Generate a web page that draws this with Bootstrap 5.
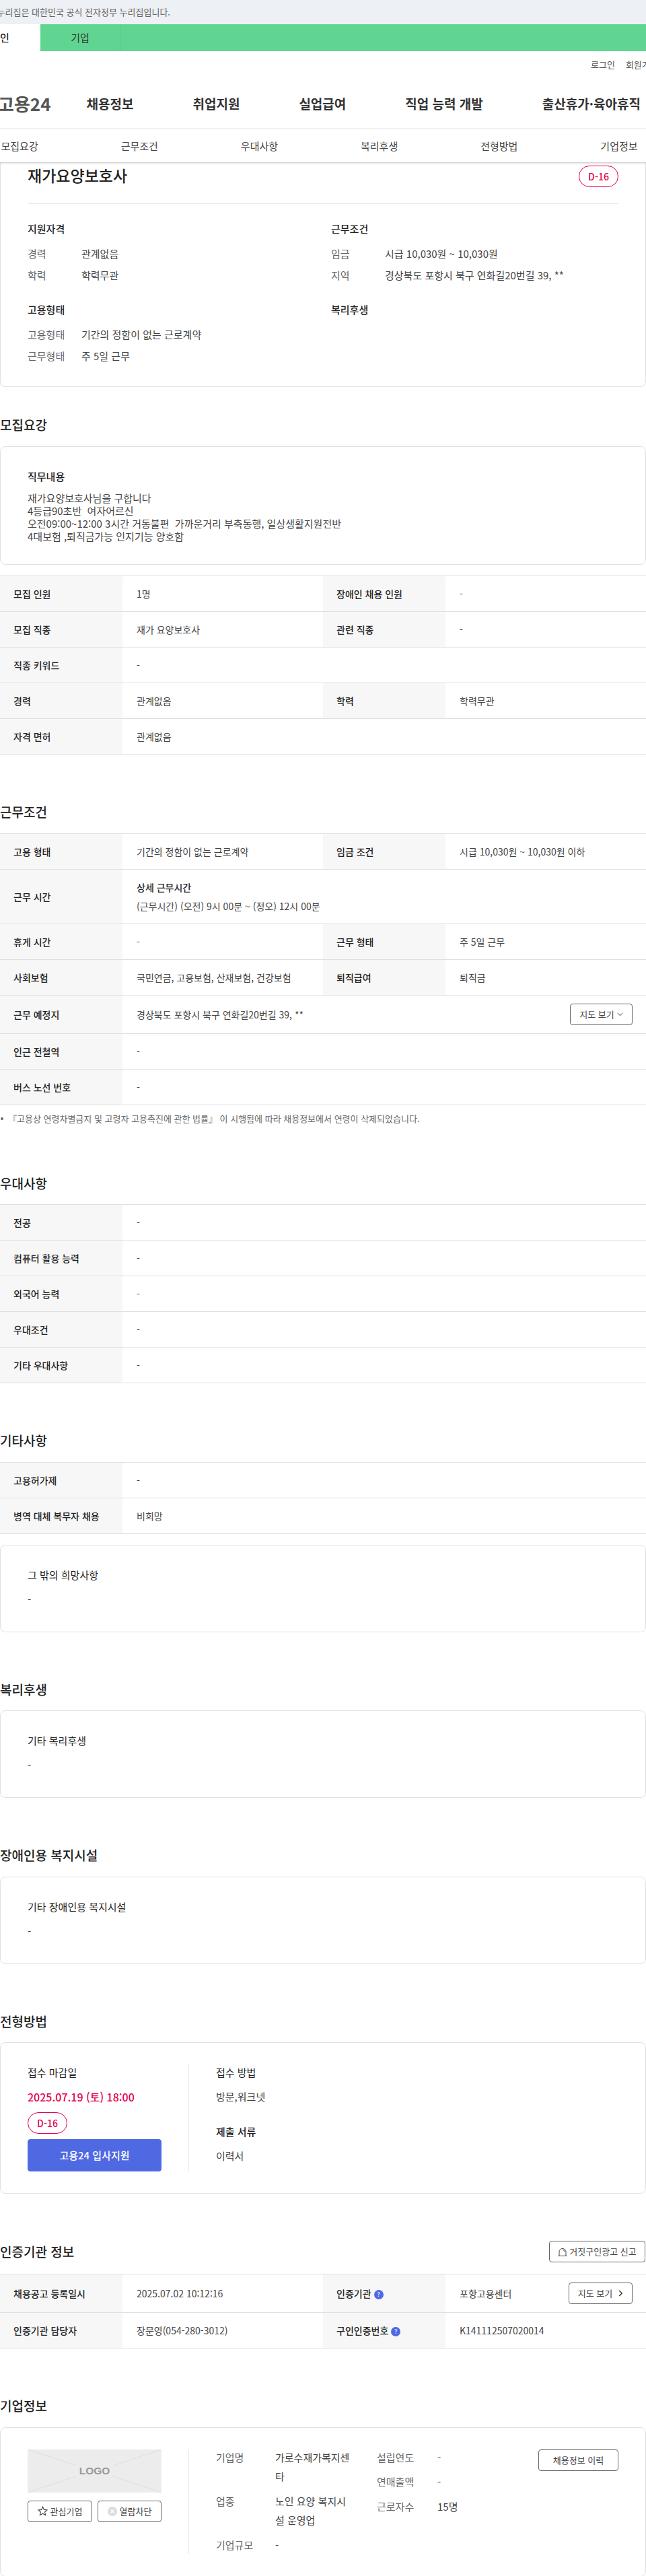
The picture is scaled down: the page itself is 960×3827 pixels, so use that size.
<!doctype html>
<html lang="ko">
<head>
<meta charset="utf-8">
<title>재가요양보호사</title>
<link href="https://cdn.jsdelivr.net/npm/bootstrap@5.3.0/dist/css/bootstrap.min.css" rel="stylesheet">
<style>
html,body{margin:0;background:#fff}
body{font-family:"Noto Sans CJK KR","Noto Sans",sans-serif;color:#333;font-size:15px;line-height:24px;overflow-x:hidden;width:960px}
.gov-strip{height:36px;background:#edf0f5;color:#666;font-size:13px;overflow:hidden;white-space:nowrap}
.gov-strip span{margin-left:-20px}
.aud-tabs{height:40px;background:#60d591;overflow:hidden}
.aud-tab{width:120px;flex:none;color:#333;font-size:15px}
.aud-tab.on{margin-left:-60px;background:#fff;color:#222;font-weight:500}
.aud-tab.off{width:119px;border-right:1px solid #56c985}
.util-row{height:40px;font-size:13px;color:#555;white-space:nowrap;overflow:hidden;padding-left:878px;gap:16px}
.main-nav{height:76px;border-bottom:1px solid #e8e8e8;overflow:hidden;white-space:nowrap;gap:88px}
.brand{font-size:26px;font-weight:700;color:#555;margin-left:-3px;margin-right:-35px}
.main-nav .nv{font-size:19px;font-weight:600;color:#333}
.sec-nav{height:49px;margin-left:-60px;width:1069px;font-size:15px;color:#444}
.sec-nav>div{flex:1 1 0;text-align:center}
.sec-wrap{overflow:hidden;box-shadow:0 1px 3px rgba(0,0,0,.25);position:relative;z-index:2;background:#fff}
.sheet{--bs-card-border-color:#e0e0e0;--bs-card-border-radius:8px;--bs-card-inner-border-radius:7px;--bs-card-color:#333}
.sheet .card-body{padding:32px 40px}
.summary{border-top:0;border-top-left-radius:0;border-top-right-radius:0;height:334px}
.summary .card-body{padding:5px 40px 0}
.job-title{font-size:23px;font-weight:500;line-height:28px;color:#222;margin:0}
.dday{display:inline-flex;align-items:center;justify-content:center;width:59px;height:32px;border:1px solid #e6004d;border-radius:16px;color:#e6004d;font-size:14px;font-weight:500}
.sum-line{margin:24px 0 25px;border:0;border-top:1px solid #e8e8e8;opacity:1}
.sum-grid{display:grid;grid-template-columns:451px 1fr}
.sub-h{font-size:15px;font-weight:500;color:#222;line-height:24px;margin:0}
.sum-list{margin:9px 0 23px}
.sum-row{display:flex;line-height:32px}
.sum-row dt{width:80px;font-weight:400;color:#666;flex:none}
.sum-row dd{margin:0;color:#444}
.sect{padding-top:71px}
.sect-h{font-size:19px;font-weight:500;line-height:28px;color:#222;margin:0 0 17.5px}
.body-txt{line-height:19px;margin:10.5px 0 0;color:#444}
.info-tbl{table-layout:fixed;margin:0;font-size:14px;border-top:1px solid #e0e0e0;--bs-table-border-color:#e0e0e0;--bs-table-color:#444}
.info-tbl.table>tbody>tr>*{padding:12px 20px;line-height:28px;vertical-align:middle;border-bottom:1px solid #e0e0e0}
.info-tbl.table>tbody>tr>th{background:#f7f7f7;font-weight:500;color:#222}
.info-tbl.table>tbody>tr>td{padding-left:21px}
.w-lab{width:182px}.w-val{width:298px}
.line-btn{height:32px;border:1px solid #666;border-radius:4px;background:#fff;color:#444;font-size:13px;padding:0;line-height:30px;display:inline-flex;align-items:center;justify-content:center;gap:4px;white-space:nowrap}
.map-b{width:93px}.map-c{width:95px;gap:9px}
.note{margin-top:11px;font-size:13px;line-height:18px;color:#666;gap:7px;align-items:center}
.note i{width:4px;height:4px;border-radius:50%;background:#666;margin-left:1px;flex:none}
.cap-txt{margin:12px 0 0;color:#444}
.cap-h{font-size:15px;font-weight:400;color:#222;line-height:24px;margin:0}
.pick-l{width:240px;padding-right:40px;border-right:1px solid #e8e8e8;flex:none;box-sizing:border-box}
.pick-r{padding-left:40px}
.due{font-size:16px;font-weight:500;color:#e6004d;margin:12px 0 11px}
.apply{--bs-btn-bg:#4f69e3;--bs-btn-border-color:#4f69e3;--bs-btn-color:#fff;--bs-btn-hover-bg:#4f69e3;--bs-btn-hover-border-color:#4f69e3;--bs-btn-hover-color:#fff;--bs-btn-border-radius:4px;height:48px;width:199px;margin-top:8px;font-size:15px;font-weight:500;padding:0;line-height:46px;display:block}
.q-dot{display:inline-flex;align-items:center;justify-content:center;width:14px;height:14px;border-radius:50%;background:#4f69e3;color:#fff;font-size:9px;line-height:14px;margin-left:4px;vertical-align:1px}
.logo-box{position:relative;width:199px;height:64px;background:#ececec;color:#999;font:700 15.5px/64px "Liberation Sans",sans-serif;text-align:center}
.logo-box svg{position:absolute;inset:0}
.logo-box span{position:relative}
.co-btns{gap:8px;margin-top:12px}
.co-a{width:96px}.co-b{width:95px}
.co-r{padding-left:40px;flex:1;gap:0;color:#444}
.co-a-col{width:239px;flex:none}
.co-b-col{width:240px;flex:none}
.co-row{display:flex;line-height:28.5px;margin-bottom:8px}
.co-row .k{color:#666;flex:none;width:88px}
.co-b-col .co-row .k{width:90px}
.co-row .v{width:112px;word-break:break-all;color:#444}
.co-hist{width:119px;height:32px;margin-left:auto}
.co-top{margin-top:-2px}
</style>
</head>
<body>
<div class="gov-strip d-flex align-items-center"><span>이 누리집은 대한민국 공식 전자정부 누리집입니다.</span></div>
<div class="aud-tabs d-flex">
  <div class="aud-tab on d-flex align-items-center justify-content-center">개인</div>
  <div class="aud-tab off d-flex align-items-center justify-content-center">기업</div>
</div>
<div class="util-row d-flex align-items-center"><span>로그인</span><span>회원가입</span></div>
<nav class="main-nav d-flex align-items-center">
  <span class="brand">고용24</span>
  <span class="nv">채용정보</span><span class="nv">취업지원</span><span class="nv">실업급여</span><span class="nv">직업 능력 개발</span><span class="nv">출산휴가·육아휴직</span>
</nav>
<div class="sec-wrap">
  <div class="sec-nav d-flex align-items-center">
    <div>모집요강</div><div>근무조건</div><div>우대사항</div><div>복리후생</div><div>전형방법</div><div>기업정보</div>
  </div>
</div>

<div class="card sheet summary">
  <div class="card-body">
    <div class="d-flex justify-content-between align-items-start">
      <h1 class="job-title">재가요양보호사</h1>
      <span class="dday">D-16</span>
    </div>
    <hr class="sum-line">
    <div class="sum-grid">
      <div>
        <h3 class="sub-h">지원자격</h3>
        <dl class="sum-list">
          <div class="sum-row"><dt>경력</dt><dd>관계없음</dd></div>
          <div class="sum-row"><dt>학력</dt><dd>학력무관</dd></div>
        </dl>
      </div>
      <div>
        <h3 class="sub-h">근무조건</h3>
        <dl class="sum-list">
          <div class="sum-row"><dt>임금</dt><dd>시급 10,030원 ~ 10,030원</dd></div>
          <div class="sum-row"><dt>지역</dt><dd>경상북도 포항시 북구 연화길20번길 39, **</dd></div>
        </dl>
      </div>
      <div>
        <h3 class="sub-h">고용형태</h3>
        <dl class="sum-list mb-0">
          <div class="sum-row"><dt>고용형태</dt><dd>기간의 정함이 없는 근로계약</dd></div>
          <div class="sum-row"><dt>근무형태</dt><dd>주 5일 근무</dd></div>
        </dl>
      </div>
      <div><h3 class="sub-h">복리후생</h3></div>
    </div>
  </div>
</div>

<section style="padding-top:42px">
  <h2 class="sect-h">모집요강</h2>
  <div class="card sheet">
    <div class="card-body">
      <h3 class="sub-h">직무내용</h3>
      <p class="body-txt mb-0">재가요양보호사님을 구합니다<br>4등급90초반&nbsp; 여자어르신<br>오전09:00~12:00 3시간 거동불편&nbsp; 가까운거리 부축동행, 일상생활지원전반<br>4대보험 ,퇴직금가능 인지기능 양호함</p>
    </div>
  </div>
  <table class="table info-tbl" style="margin-top:16px">
    <colgroup><col class="w-lab"><col class="w-val"><col class="w-lab"><col class="w-val"></colgroup>
    <tbody>
      <tr><th>모집 인원</th><td>1명</td><th>장애인 채용 인원</th><td>-</td></tr>
      <tr><th>모집 직종</th><td>재가 요양보호사</td><th>관련 직종</th><td>-</td></tr>
      <tr><th>직종 키워드</th><td colspan="3">-</td></tr>
      <tr><th>경력</th><td>관계없음</td><th>학력</th><td>학력무관</td></tr>
      <tr><th>자격 면허</th><td colspan="3">관계없음</td></tr>
    </tbody>
  </table>
</section>

<section class="sect">
  <h2 class="sect-h">근무조건</h2>
  <table class="table info-tbl">
    <colgroup><col class="w-lab"><col class="w-val"><col class="w-lab"><col class="w-val"></colgroup>
    <tbody>
      <tr><th>고용 형태</th><td>기간의 정함이 없는 근로계약</td><th>임금 조건</th><td>시급 10,030원 ~ 10,030원 이하</td></tr>
      <tr><th>근무 시간</th><td colspan="3"><div class="fw-medium text-dark">상세 근무시간</div><div>(근무시간) (오전) 9시 00분 ~ (정오) 12시 00분</div></td></tr>
      <tr><th>휴게 시간</th><td>-</td><th>근무 형태</th><td>주 5일 근무</td></tr>
      <tr><th>사회보험</th><td>국민연금, 고용보험, 산재보험, 건강보험</td><th>퇴직급여</th><td>퇴직금</td></tr>
      <tr><th>근무 예정지</th><td colspan="3"><div class="d-flex justify-content-between align-items-center"><span>경상북도 포항시 북구 연화길20번길 39, **</span><button type="button" class="btn line-btn map-b">지도 보기 <svg width="9" height="6" viewBox="0 0 9 6" fill="none" stroke="#444" stroke-width="1"><path d="M.7.8 4.5 4.8 8.3.8"/></svg></button></div></td></tr>
      <tr><th>인근 전철역</th><td colspan="3">-</td></tr>
      <tr><th>버스 노선 번호</th><td colspan="3">-</td></tr>
    </tbody>
  </table>
  <div class="note d-flex"><i></i><span>『고용상 연령차별금지 및 고령자 고용촉진에 관한 법률』 이 시행됨에 따라 채용정보에서 연령이 삭제되었습니다.</span></div>
</section>

<section class="sect" style="padding-top:73px">
  <h2 class="sect-h">우대사항</h2>
  <table class="table info-tbl">
    <colgroup><col class="w-lab"><col></colgroup>
    <tbody>
      <tr><th>전공</th><td>-</td></tr>
      <tr><th>컴퓨터 활용 능력</th><td>-</td></tr>
      <tr><th>외국어 능력</th><td>-</td></tr>
      <tr><th>우대조건</th><td>-</td></tr>
      <tr><th>기타 우대사항</th><td>-</td></tr>
    </tbody>
  </table>
</section>

<section class="sect">
  <h2 class="sect-h">기타사항</h2>
  <table class="table info-tbl">
    <colgroup><col class="w-lab"><col></colgroup>
    <tbody>
      <tr><th>고용허가제</th><td>-</td></tr>
      <tr><th>병역 대체 복무자 채용</th><td>비희망</td></tr>
    </tbody>
  </table>
  <div class="card sheet" style="margin-top:16px">
    <div class="card-body">
      <h3 class="cap-h">그 밖의 희망사항</h3>
      <p class="cap-txt mb-1">-</p>
    </div>
  </div>
</section>

<section class="sect">
  <h2 class="sect-h">복리후생</h2>
  <div class="card sheet">
    <div class="card-body">
      <h3 class="cap-h">기타 복리후생</h3>
      <p class="cap-txt mb-1">-</p>
    </div>
  </div>
</section>

<section class="sect">
  <h2 class="sect-h">장애인용 복지시설</h2>
  <div class="card sheet">
    <div class="card-body">
      <h3 class="cap-h">기타 장애인용 복지시설</h3>
      <p class="cap-txt mb-1">-</p>
    </div>
  </div>
</section>

<section class="sect">
  <h2 class="sect-h">전형방법</h2>
  <div class="card sheet">
    <div class="card-body d-flex">
      <div class="pick-l">
        <h3 class="cap-h">접수 마감일</h3>
        <div class="due">2025.07.19 (토) 18:00</div>
        <span class="dday d-flex">D-16</span>
        <button type="button" class="btn apply">고용24 입사지원</button>
      </div>
      <div class="pick-r">
        <h3 class="cap-h">접수 방법</h3>
        <p class="cap-txt mb-0">방문,워크넷</p>
        <h3 class="sub-h" style="margin-top:28px">제출 서류</h3>
        <p class="cap-txt mb-0">이력서</p>
      </div>
    </div>
  </div>
</section>

<section class="sect" style="padding-top:70px">
  <div class="d-flex justify-content-between align-items-center" style="height:32px;margin-bottom:17px">
    <h2 class="sect-h mb-0">인증기관 정보</h2>
    <button type="button" class="btn line-btn" style="width:143px;margin-right:1px;gap:3px"><svg width="14" height="13" viewBox="0 0 14 13" fill="none" stroke="#444" stroke-width="1"><path d="M2 12.5V6.5a5 5 0 0 1 10 0v6M.5 12.5h13M7 3.5a3 3 0 0 1 3 3"/></svg> 거짓구인광고 신고</button>
  </div>
  <table class="table info-tbl">
    <colgroup><col class="w-lab"><col class="w-val"><col class="w-lab"><col class="w-val"></colgroup>
    <tbody>
      <tr><th>채용공고 등록일시</th><td>2025.07.02 10:12:16</td><th>인증기관<span class="q-dot">?</span></th><td><div class="d-flex justify-content-between align-items-center"><span>포항고용센터</span><button type="button" class="btn line-btn map-c">지도 보기 <svg width="7" height="10" viewBox="0 0 7 10" fill="none" stroke="#333" stroke-width="1.4"><path d="M1.2 1 5.2 5 1.2 9"/></svg></button></div></td></tr>
      <tr><th>인증기관 담당자</th><td>장문영(054-280-3012)</td><th>구인인증번호<span class="q-dot">?</span></th><td>K141112507020014</td></tr>
    </tbody>
  </table>
</section>

<section class="sect">
  <h2 class="sect-h">기업정보</h2>
  <div class="card sheet">
    <div class="card-body d-flex">
      <div class="pick-l">
        <div class="logo-box">
          <svg width="199" height="64" viewBox="0 0 199 64" fill="none" stroke="#dedede"><path d="M0 0 72 24M199 0 127 24M0 64 72 40M199 64 127 40"/></svg>
          <span>LOGO</span>
        </div>
        <div class="co-btns d-flex">
          <button type="button" class="btn line-btn co-a"><svg width="15" height="15" viewBox="0 0 15 15" fill="none" stroke="#444" stroke-width="1.1"><path d="M7.5 1.2 9.4 5.4 14 5.9 10.6 9l1 4.6-4.1-2.4-4.1 2.4 1-4.6L1 5.9l4.6-.5z"/></svg>관심기업</button>
          <button type="button" class="btn line-btn co-b"><svg width="14" height="14" viewBox="0 0 14 14"><circle cx="7" cy="7" r="7" fill="#dcdcdc"/><path d="M4.5 4.5l5 5M9.5 4.5l-5 5" stroke="#fff" stroke-width="1.4"/></svg>열람차단</button>
        </div>
      </div>
      <div class="co-r d-flex">
        <div class="co-a-col co-top">
          <div class="co-row"><span class="k">기업명</span><span class="v">가로수재가복지센타</span></div>
          <div class="co-row"><span class="k">업종</span><span class="v">노인 요양 복지시설 운영업</span></div>
          <div class="co-row mb-0"><span class="k">기업규모</span><span class="v">-</span></div>
        </div>
        <div class="co-b-col co-top">
          <div class="co-row"><span class="k">설립연도</span><span>-</span></div>
          <div class="co-row"><span class="k">연매출액</span><span>-</span></div>
          <div class="co-row"><span class="k">근로자수</span><span>15명</span></div>
        </div>
        <button type="button" class="btn line-btn co-hist">채용정보 이력</button>
      </div>
    </div>
  </div>
</section>
<script src="https://cdn.jsdelivr.net/npm/bootstrap@5.3.0/dist/js/bootstrap.bundle.min.js"></script>
</body>
</html>
